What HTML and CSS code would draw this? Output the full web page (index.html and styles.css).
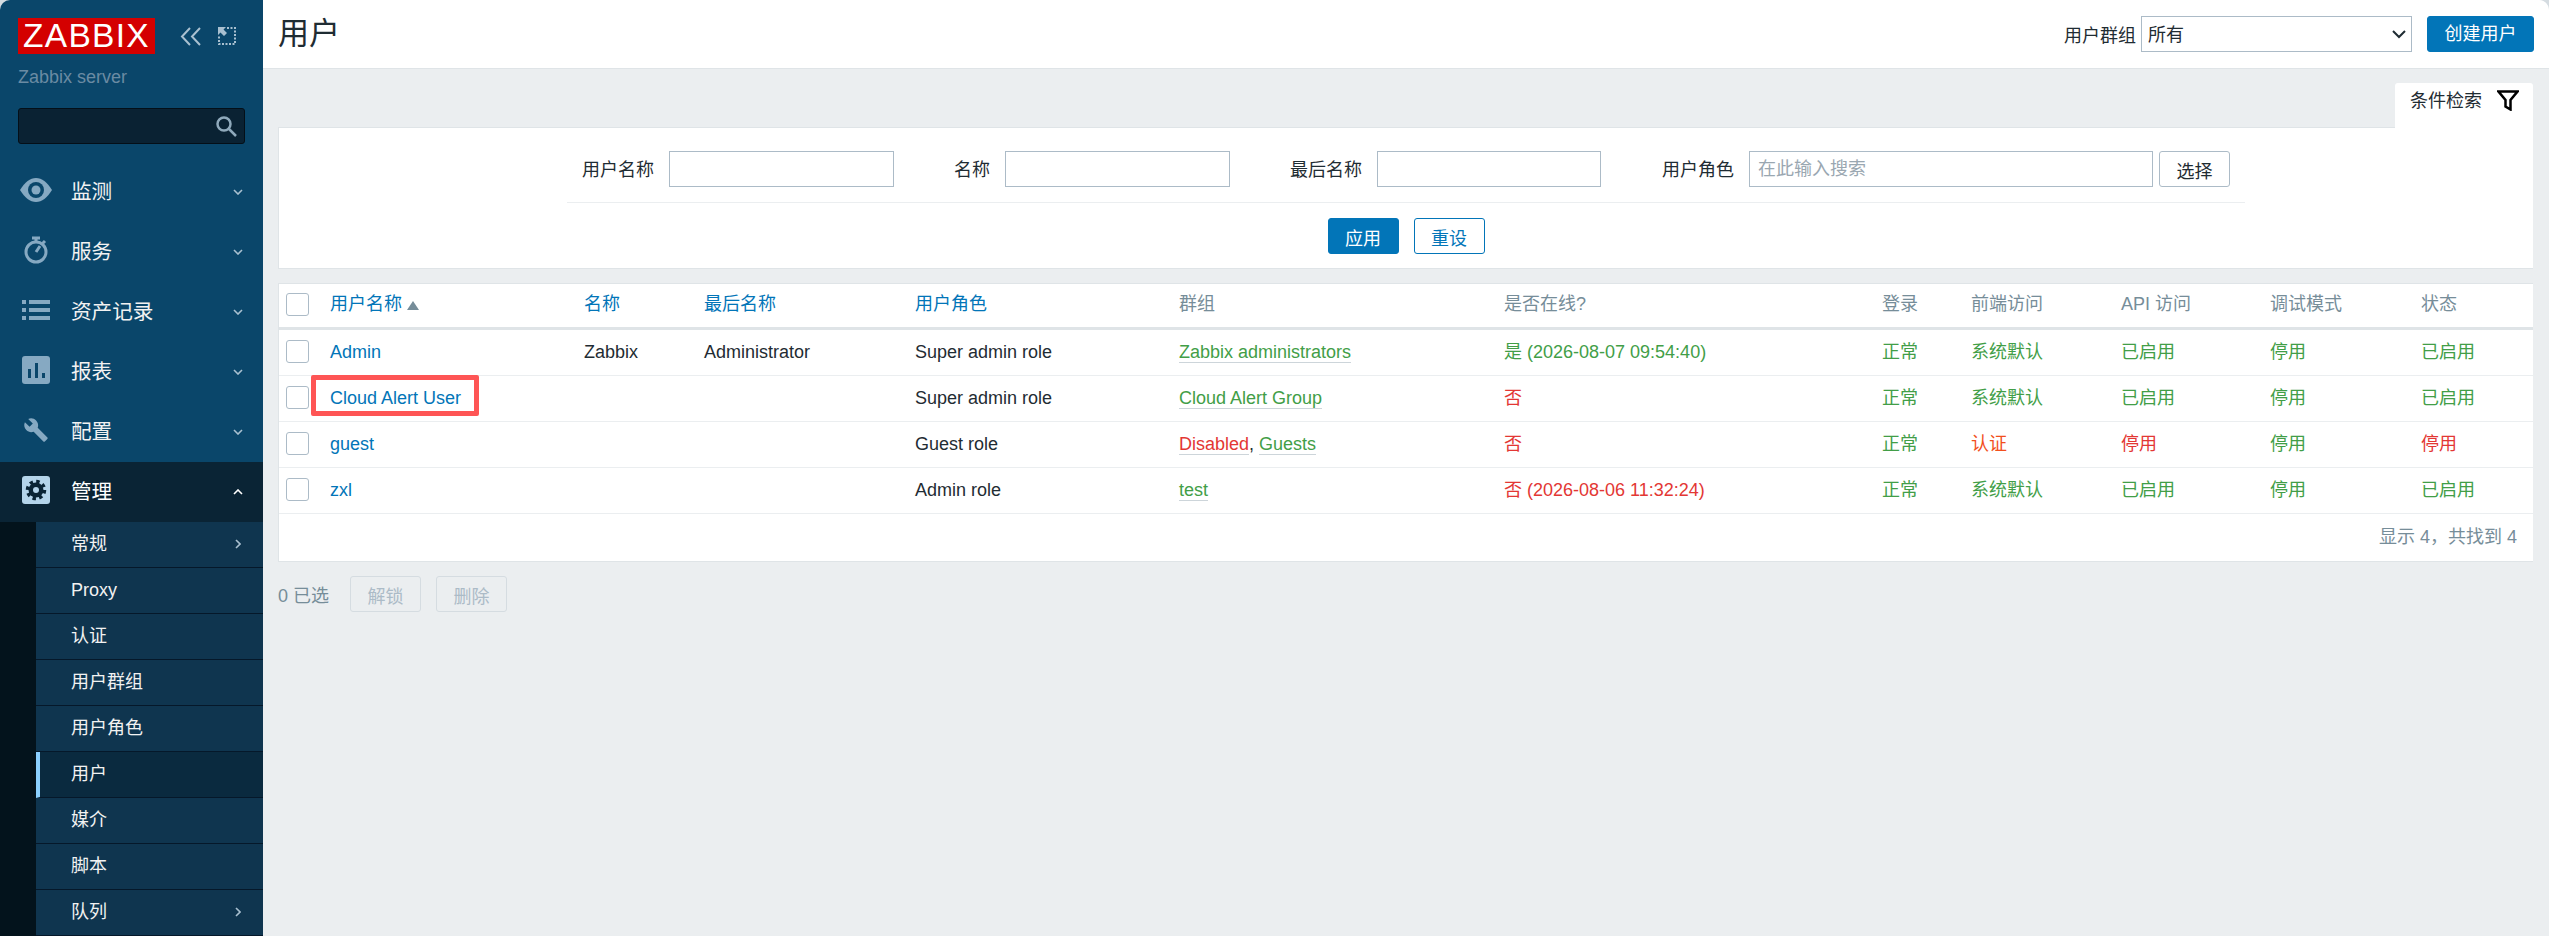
FILE: index.html
```html
<!DOCTYPE html>
<html lang="zh-CN">
<head>
  <meta charset="UTF-8" />
  <title>用户</title>
  <link rel="stylesheet" href="styles.css">
</head>
<body>
<div class="app">

  <aside class="sidebar">
    <div class="brand">
      <div class="logo">ZABBIX</div>
      <svg class="collapse-icon" viewBox="0 0 21 19"><path d="M10 1 2 9.500l8 8.500M20 1l-8 8.500 8 8.500"/></svg>
      <svg class="kiosk-icon" viewBox="0 0 18 18"><path class="kiosk-dots" d="M9 1h8v16H1V9"/><path class="kiosk-arrow" d="M0 0h8L5.500 2.500 9 6 6 9 2.500 5.500 0 8z"/></svg>
    </div>
    <div class="server-name">Zabbix server</div>
    <div class="search">
      <svg class="search-icon" viewBox="0 0 21 21"><circle cx="8" cy="8" r="6.500"/><path d="m13 13 7 7"/></svg>
    </div>

    <ul class="nav">
      <li class="nav-item">
        <svg class="nav-icon" viewBox="0 0 32 24"><path class="ico" d="M0 12C5 4 10 0 16 0s11 4 16 12c-5 8-10 12-16 12S5 20 0 12z"/><circle class="ico-cut" cx="16" cy="12" r="8"/><circle class="ico" cx="16" cy="12" r="4.500"/></svg>
        <span>监测</span>
        <svg class="chev" viewBox="0 0 10 6"><path d="m1 1 4 4 4-4"/></svg>
      </li>
      <li class="nav-item">
        <svg class="nav-icon" viewBox="0 0 32 28"><g class="ico-line"><circle cx="16" cy="16" r="10"/><path d="M12 2h8M16 2v4M25 5l-2.500 2.500M16 16l4-6"/></g></svg>
        <span>服务</span>
        <svg class="chev" viewBox="0 0 10 6"><path d="m1 1 4 4 4-4"/></svg>
      </li>
      <li class="nav-item">
        <svg class="nav-icon" viewBox="0 0 32 24"><path class="ico" d="M2 2h4v4H2zM9 2h21v4H9zM2 10h4v4H2zM9 10h21v4H9zM2 18h4v4H2zM9 18h21v4H9z"/></svg>
        <span>资产记录</span>
        <svg class="chev" viewBox="0 0 10 6"><path d="m1 1 4 4 4-4"/></svg>
      </li>
      <li class="nav-item">
        <svg class="nav-icon" viewBox="0 0 32 28"><rect class="ico" x="2" width="28" height="28" rx="3"/><path class="ico-cut" d="M8 13h3v9H8zM15 7h3v15h-3zM22 17h3v5h-3z"/></svg>
        <span>报表</span>
        <svg class="chev" viewBox="0 0 10 6"><path d="m1 1 4 4 4-4"/></svg>
      </li>
      <li class="nav-item">
        <svg class="nav-icon" viewBox="-3 0 30 24"><path class="ico" d="M22.700 19l-9.100-9.100c.9-2.300.4-5-1.500-6.900-2-2-5-2.400-7.400-1.300L9 6 6 9 1.600 4.700C.4 7.100.9 10.100 2.900 12.100c1.900 1.900 4.600 2.400 6.900 1.500l9.100 9.100c.4.4 1 .4 1.400 0l2.300-2.300c.5-.4.5-1.100.1-1.400z"/></svg>
        <span>配置</span>
        <svg class="chev" viewBox="0 0 10 6"><path d="m1 1 4 4 4-4"/></svg>
      </li>
      <li class="nav-item open">
        <svg class="nav-icon" viewBox="0 0 32 28"><rect class="ico" x="2" width="28" height="28" rx="3"/><circle class="gear-teeth" cx="16" cy="14" r="8.500"/><circle class="ico-cut" cx="16" cy="14" r="7.500"/><circle class="ico" cx="16" cy="14" r="3"/></svg>
        <span>管理</span>
        <svg class="chev" viewBox="0 0 10 6"><path d="m1 5 4-4 4 4"/></svg>
      </li>
    </ul>

    <ul class="subnav">
      <li class="sub-item">常规<svg class="sub-arrow" viewBox="0 0 6 10"><path d="m1 1 4 4-4 4"/></svg></li>
      <li class="sub-item">Proxy</li>
      <li class="sub-item">认证</li>
      <li class="sub-item">用户群组</li>
      <li class="sub-item">用户角色</li>
      <li class="sub-item current">用户</li>
      <li class="sub-item">媒介</li>
      <li class="sub-item">脚本</li>
      <li class="sub-item">队列<svg class="sub-arrow" viewBox="0 0 6 10"><path d="m1 1 4 4-4 4"/></svg></li>
    </ul>
  </aside>

  <div class="main">
    <header class="topbar">
      <h1>用户</h1>
      <div class="topbar-controls">
        <label class="group-label">用户群组</label>
        <div class="select-wrap">
          <select class="group-select"><option>所有</option></select>
          <svg class="select-chev" viewBox="0 0 14 9"><path d="m1 1 6 6 6-6"/></svg>
        </div>
        <button class="btn btn-primary">创建用户</button>
      </div>
    </header>

    <div class="content">
      <div class="filter-tabs">
        <div class="filter-tab">
          条件检索
          <svg class="funnel" viewBox="0 0 22 21"><path d="M1.500 1.500h19l-7 8.500v9.500l-5-3V10z"/></svg>
        </div>
      </div>

      <section class="filter">
        <div class="filter-grid">
          <label>用户名称</label><input class="field" type="text">
          <label>名称</label><input class="field" type="text">
          <label>最后名称</label><input class="field" type="text">
          <label>用户角色</label>
          <div class="role-field">
            <input class="field" type="text" placeholder="在此输入搜索">
            <button class="btn btn-plain">选择</button>
          </div>
        </div>
        <div class="filter-actions">
          <button class="btn btn-primary">应用</button>
          <button class="btn btn-outline">重设</button>
        </div>
      </section>

      <section class="list">
        <table class="users">
          <colgroup>
            <col class="c-check"><col class="c-user"><col class="c-name"><col class="c-last"><col class="c-role"><col class="c-group"><col class="c-online"><col class="c-login"><col class="c-front"><col class="c-api"><col class="c-debug"><col class="c-status">
          </colgroup>
          <thead>
            <tr>
              <th><span class="check"></span></th>
              <th class="sortable">用户名称<i class="sort-up"></i></th>
              <th class="sortable">名称</th>
              <th class="sortable">最后名称</th>
              <th class="sortable">用户角色</th>
              <th>群组</th>
              <th>是否在线?</th>
              <th>登录</th>
              <th>前端访问</th>
              <th>API 访问</th>
              <th>调试模式</th>
              <th>状态</th>
            </tr>
          </thead>
          <tbody>
            <tr>
              <td><span class="check"></span></td>
              <td class="link">Admin</td>
              <td>Zabbix</td>
              <td>Administrator</td>
              <td>Super admin role</td>
              <td><span class="group-link ok">Zabbix administrators</span></td>
              <td class="ok">是 (2026-08-07 09:54:40)</td>
              <td class="ok">正常</td>
              <td class="ok">系统默认</td>
              <td class="ok">已启用</td>
              <td class="ok">停用</td>
              <td class="ok">已启用</td>
            </tr>
            <tr>
              <td><span class="check"></span></td>
              <td class="link marked">Cloud Alert User<span class="highlight"></span></td>
              <td></td>
              <td></td>
              <td>Super admin role</td>
              <td><span class="group-link ok">Cloud Alert Group</span></td>
              <td class="bad">否</td>
              <td class="ok">正常</td>
              <td class="ok">系统默认</td>
              <td class="ok">已启用</td>
              <td class="ok">停用</td>
              <td class="ok">已启用</td>
            </tr>
            <tr>
              <td><span class="check"></span></td>
              <td class="link">guest</td>
              <td></td>
              <td></td>
              <td>Guest role</td>
              <td><span class="group-link bad">Disabled</span>, <span class="group-link ok">Guests</span></td>
              <td class="bad">否</td>
              <td class="ok">正常</td>
              <td class="warn">认证</td>
              <td class="bad">停用</td>
              <td class="ok">停用</td>
              <td class="bad">停用</td>
            </tr>
            <tr>
              <td><span class="check"></span></td>
              <td class="link">zxl</td>
              <td></td>
              <td></td>
              <td>Admin role</td>
              <td><span class="group-link ok">test</span></td>
              <td class="bad">否 (2026-08-06 11:32:24)</td>
              <td class="ok">正常</td>
              <td class="ok">系统默认</td>
              <td class="ok">已启用</td>
              <td class="ok">停用</td>
              <td class="ok">已启用</td>
            </tr>
          </tbody>
        </table>
        <div class="paging">显示 4，共找到 4</div>
      </section>

      <div class="actions">
        <span class="selected">0 已选</span>
        <button class="btn btn-disabled">解锁</button>
        <button class="btn btn-disabled">删除</button>
      </div>
    </div>
  </div>

</div>
</body>
</html>
```

FILE: styles.css
```css
* { box-sizing: border-box; }

html, body { height: 100%; }

body {
  margin: 0;
  background: #d5dce1;
  font-family: "Liberation Sans", "Noto Sans CJK SC", sans-serif;
  font-size: 18px;
  line-height: 20px;
  color: #1f2c33;
  overflow: hidden;
}

ul { list-style: none; margin: 0; padding: 0; }

.app {
  display: flex;
  height: 936px;
  border-radius: 10px 10px 0 0;
  overflow: hidden;
}

/* sidebar */
.sidebar {
  width: 263px;
  flex: none;
  background: #0a466a;
  color: #f2f2f2;
  height: 936px;
  overflow: hidden;
}

.brand {
  display: flex;
  align-items: center;
  padding: 18px 0 0 18px;
  height: 54px;
}

.logo {
  width: 137px;
  height: 36px;
  background: #d40000;
  color: #fff;
  font-size: 33.5px;
  line-height: 36px;
  letter-spacing: 1.300px;
  text-align: center;
}

.collapse-icon {
  width: 21px;
  height: 19px;
  margin-left: 25px;
  fill: none;
  stroke: #a9c0d0;
  stroke-width: 2;
}

.kiosk-icon {
  width: 18px;
  height: 18px;
  margin-left: 17px;
}

.kiosk-dots { fill: none; stroke: #a9c0d0; stroke-width: 2; stroke-dasharray: 2 1.500; }
.kiosk-arrow { fill: #a9c0d0; }

.server-name {
  margin: 12px 0 0 18px;
  color: #6a8ba3;
  line-height: 22px;
}

.search {
  display: flex;
  align-items: center;
  justify-content: flex-end;
  width: 227px;
  height: 36px;
  margin: 20px 0 0 18px;
  padding-right: 7px;
  background: #0a2233;
  border: 1px solid #040f18;
  border-radius: 3px;
}

.search-icon {
  width: 21px;
  height: 21px;
  fill: none;
  stroke: #8fa9bb;
  stroke-width: 2.500;
}

.nav { margin-top: 18px; }

.nav-item {
  display: flex;
  align-items: center;
  height: 60px;
  padding: 0 20px 4px 20px;
  font-size: 20.600px;
}

.nav-item span { flex: 1; margin-left: 19px; padding-top: 3px; }

.nav-item.open { background: #0a2435; color: #fff; }

.nav-icon { width: 32px; height: 28px; flex: none; }

.ico { fill: #86a9c2; }
.ico-cut { fill: #0a466a; }
.ico-line { fill: none; stroke: #86a9c2; stroke-width: 3; }
.gear-teeth { fill: none; stroke: #0a2435; stroke-width: 3.500; stroke-dasharray: 3.400 3.270; }

.open .ico { fill: #b4d4ea; }
.open .ico-cut { fill: #0a2435; }

.chev {
  width: 10px;
  height: 6px;
  margin-top: 3px;
  fill: none;
  stroke: #a9c0d0;
  stroke-width: 1.600;
}

.open .chev { stroke: #fff; }

.subnav {
  border-left: 36px solid #03131c;
}

.sub-item {
  display: flex;
  align-items: center;
  justify-content: space-between;
  height: 46px;
  padding: 0 22px 1px 35px;
  background: #0f354f;
  border-bottom: 1px solid #05182a;
}

.sub-item.current {
  background: #0a2a3f;
  border-left: 4px solid #8ad0ff;
  padding-left: 31px;
}

.sub-arrow {
  width: 6px;
  height: 10px;
  fill: none;
  stroke: #a9c0d0;
  stroke-width: 1.600;
}

/* main area */
.main {
  flex: 1;
  background: #ebeef0;
  min-width: 0;
}

.topbar {
  display: flex;
  align-items: center;
  justify-content: space-between;
  height: 69px;
  padding: 0 15px;
  background: #fff;
  border-bottom: 1px solid #dfe4e7;
}

.topbar h1 {
  margin: 0;
  font-size: 31px;
  line-height: 36px;
  font-weight: normal;
}

.topbar-controls { display: flex; align-items: center; }

.group-label { margin-right: 5px; padding-top: 3px; }

.select-wrap {
  position: relative;
  margin-right: 15px;
}

.group-select {
  display: block;
  width: 271px;
  height: 36px;
  padding: 2px 0 0 6px;
  background: #fff;
  border: 1px solid #acbbc7;
  border-radius: 0;
  appearance: none;
  font: inherit;
  color: inherit;
}

.select-chev {
  position: absolute;
  right: 6px;
  top: 14px;
  width: 14px;
  height: 9px;
  fill: none;
  stroke: #1f2c33;
  stroke-width: 2;
}

.btn {
  height: 36px;
  width: 71px;
  padding: 5px 0 0;
  font: inherit;
  border-radius: 3px;
  border: 1px solid transparent;
}

.btn-primary { background: #0275b8; border-color: #0275b8; color: #fff; }
.btn-outline { background: #fff; border-color: #0275b8; color: #0275b8; }
.btn-plain { background: #fff; border-color: #acbbc7; color: #1f2c33; }
.btn-disabled { background: #ebeef0; border-color: #d5dce1; color: #acbbc7; }

.topbar .btn-primary { width: 107px; padding: 0; }

.content { padding: 14px 16px 0 15px; }

.filter-tabs {
  display: flex;
  justify-content: flex-end;
  margin-bottom: -1px;
}

.filter-tab {
  position: relative;
  z-index: 1;
  display: flex;
  align-items: center;
  justify-content: space-between;
  width: 138px;
  height: 45px;
  padding: 0 14px 10px 15px;
  background: #fff;
  border-radius: 3px 3px 0 0;
}

.funnel {
  width: 22px;
  height: 21px;
  fill: none;
  stroke: #000;
  stroke-width: 2.500;
}

.filter {
  height: 142px;
  background: #fff;
  border: 1px solid #dfe4e7;
  border-right: 0;
}

.filter-grid {
  display: grid;
  grid-template-columns: 87px 225px 81px 225px 117px 224px 118px 481px;
  column-gap: 15px;
  align-items: center;
  margin-left: 288px;
  width: 1678px;
  height: 75px;
  padding: 23px 15px 15px 0;
  border-bottom: 1px solid #ebeef0;
}

.filter-grid label { text-align: right; padding-top: 2px; }

.field {
  width: 100%;
  height: 36px;
  padding: 0 8px;
  background: #fff;
  border: 1px solid #acbbc7;
  border-radius: 0;
  font: inherit;
}

.field::placeholder { color: #9aa7b1; opacity: 1; }

.role-field { display: flex; gap: 6px; }
.role-field .field { flex: 1; min-width: 0; }

.filter-actions {
  display: flex;
  justify-content: center;
  gap: 15px;
  margin-top: 15px;
}

.list {
  margin-top: 14px;
  background: #fff;
  border: 1px solid #dfe4e7;
  border-right: 0;
}

.users {
  width: 2254px;
  table-layout: fixed;
  border-collapse: separate;
  border-spacing: 0;
}

.c-check { width: 43px; }
.c-user { width: 254px; }
.c-name { width: 120px; }
.c-last { width: 211px; }
.c-role { width: 264px; }
.c-group { width: 325px; }
.c-online { width: 378px; }
.c-login { width: 89px; }
.c-front { width: 150px; }
.c-api { width: 149px; }
.c-debug { width: 151px; }
.c-status { width: 120px; }

.users th, .users td {
  padding: 0 8px;
  text-align: left;
  font-weight: normal;
  white-space: nowrap;
}

.users th {
  height: 46px;
  padding-bottom: 3px;
  color: #768d99;
  border-bottom: 3px solid #dfe4e7;
}

.users td {
  height: 46px;
  padding-bottom: 2px;
  border-bottom: 1px solid #ebeef0;
}

.users th.sortable, .link { color: #0275b8; }

.sort-up {
  display: inline-block;
  margin-left: 5px;
  border-left: 6px solid transparent;
  border-right: 6px solid transparent;
  border-bottom: 9px solid #768d99;
}

.check {
  display: block;
  width: 23px;
  height: 23px;
  margin-left: -1px;
  background: #fff;
  border: 1px solid #acbbc7;
  border-radius: 3px;
}

.ok { color: #429e47; }
.bad { color: #e33734; }
.warn { color: #f24f1d; }

.group-link { border-bottom: 1px solid #cdd5da; }

.users td.marked { position: relative; }

.highlight {
  position: absolute;
  left: -11px;
  top: -1px;
  width: 168px;
  height: 41px;
  border: 5px solid #fe5555;
  border-radius: 2px;
}

.paging {
  height: 47px;
  line-height: 47px;
  padding-right: 16px;
  text-align: right;
  color: #768d99;
}

.actions {
  display: flex;
  align-items: center;
  margin-top: 14px;
}

.selected { width: 72px; flex: none; padding-top: 3px; color: #768d99; }

.actions .btn { margin-right: 15px; }
```
